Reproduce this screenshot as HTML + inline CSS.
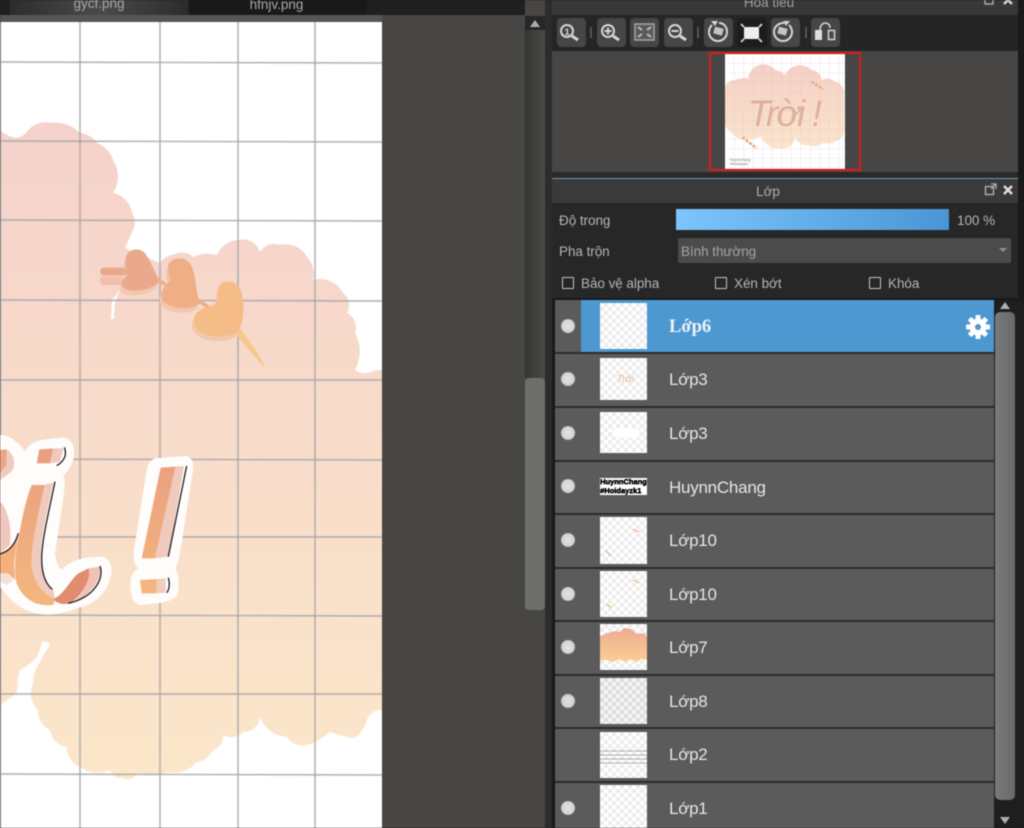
<!DOCTYPE html>
<html lang="vi">
<head>
<meta charset="utf-8">
<title>Lớp</title>
<style>
html,body{margin:0;padding:0;width:1024px;height:828px;overflow:hidden;background:#1a1a1a}
#w{position:relative;width:1024px;height:828px;overflow:hidden;font-family:"Liberation Sans","Noto Sans CJK JP",sans-serif;filter:blur(.5px)}
#w div,#w svg{position:absolute}
.tb{width:29px;height:29px;top:18px;background:#464646;border-radius:4px}
.row{left:555px;width:439px;height:52px;background:#5b5b5b}
.sep{left:555px;width:439px;height:2px;background:#2b2b2b}
.dot{left:561px;width:14px;height:14px;border-radius:50%;background:radial-gradient(circle,#e4e4e4 0,#d4d4d4 55%,#a5a5a5 100%)}
.th{left:600px;width:47px;background:repeating-conic-gradient(#ececec 0 25%,#fff 0 50%) 0 0/8px 8px}
.lb{left:669px;font-size:17px;letter-spacing:-.25px;line-height:20px;color:#e6e6e6;white-space:nowrap}
.t{color:#b5b5b5;font-size:13.5px;letter-spacing:-.05px;line-height:16px;white-space:nowrap}
.cb{width:10px;height:10px;border:1.5px solid #c4c4c4;top:277px;border-radius:1px}
</style>
</head>
<body>
<div id="w">
  <!-- background -->
  <div style="left:0;top:0;width:552px;height:828px;background:#474644"></div>

  <!-- tab bar -->
  <div style="left:0;top:0;width:525px;height:15px;background:#1f1f1f"></div>
  <div style="left:0;top:15px;width:382px;height:7px;background:#565656"></div>
  <div style="left:10px;top:0;width:178px;height:15px;background:linear-gradient(90deg,#2c2c2c,#4a4a4a 50%,#2c2c2c)"></div>
  <div style="left:190px;top:0;width:177px;height:15px;background:#191919"></div>
  <div style="left:0;top:-4px;width:198px;text-align:center;font-size:13.5px;line-height:16px;color:#a8a8a8">gycf.png</div>
  <div style="left:188px;top:-3px;width:177px;text-align:center;font-size:13.5px;line-height:16px;color:#a8a8a8">hfnjv.png</div>

  <!-- canvas -->
  <svg style="left:0;top:22px" width="382" height="806" viewBox="0 22 382 806">
    <defs>
      <linearGradient id="cg" gradientUnits="userSpaceOnUse" x1="0" y1="125" x2="0" y2="775">
        <stop offset="0" stop-color="#f5d2cb"/>
        <stop offset="1" stop-color="#fce7ca"/>
      </linearGradient>
      <linearGradient id="og" gradientUnits="userSpaceOnUse" x1="0" y1="60" x2="0" y2="520">
        <stop offset="0" stop-color="#ea9f80"/>
        <stop offset="1" stop-color="#f4b67e"/>
      </linearGradient>
    </defs>
    <rect x="0" y="22" width="382" height="806" fill="#fff"/>
    <path fill="url(#cg)" d="M0,130 Q8,137 16,138 Q22,137 26,133 A24,24 0 0 1 52,123 A34,34 0 0 1 80,133 A24,24 0 0 1 97,143 A26,26 0 0 1 113,160 A30,30 0 0 1 113,193 A24,24 0 0 1 132,213 A18,18 0 0 1 132,232 L125,248 L160,263 A16,16 0 0 1 173,255 A16,16 0 0 1 193,257 A34,34 0 0 1 217,255 A24,24 0 0 1 238,240 A18,18 0 0 1 260,252 A16,16 0 0 1 280,245 A24,24 0 0 1 307,257 A24,24 0 0 1 313,280 A26,26 0 0 1 343,293 A15,15 0 0 1 347,313 A16,16 0 0 1 355,333 A38,38 0 0 1 355,370 Q361,374 367,373 Q374,370 382,370 L382,710 A14,14 0 0 0 367,720 Q365,728 360,733 A10,10 0 0 1 347,737 Q338,735 330,732 Q318,742 307,745 A18,18 0 0 1 287,737 A30,30 0 0 1 260,717 A16,16 0 0 1 243,732 A16,16 0 0 1 223,735 A14,14 0 0 1 213,750 A20,20 0 0 1 197,762 A30,30 0 0 1 167,772 A36,36 0 0 1 137,773 A10,10 0 0 1 123,778 A12,12 0 0 1 110,770 A30,30 0 0 1 80,767 A20,20 0 0 1 67,747 A20,20 0 0 1 50,730 A20,20 0 0 1 38,710 A24,24 0 0 1 33,683 Q33,675 37,667 Q43,655 50,645 Q47,640 42,642 Q40,650 37,657 Q30,665 20,670 Q17,680 17,693 Q8,700 0,705 Z"/>
    <!-- scratch -->
    <path d="M120,290 L112,300 L111,319 L114,319 L115,302Z" fill="#fff"/>
    <!-- grid -->
    <g stroke="#a2a3a7" stroke-opacity=".75" stroke-width="1.7" fill="none">
      <path d="M80,22V828M160,22V828M238,22V828M315,22V828M.5,22V828"/>
      <path d="M0,62L382,63M0,141L382,142M0,220L382,221M0,300L382,301M0,380L382,380M0,459L382,460M0,537L382,537M0,615L382,616M0,694L382,694M0,774L382,775"/>
    </g>
    <!-- leaf sprig -->
    <g transform="translate(95,235) scale(.33333)">
      <path d="M435,280 C465,320 495,360 510,400 C480,365 450,335 425,300Z" fill="#f6c78f"/>
      <g fill="#f3c6ae" transform="translate(-6,14)">
        <path d="M92,70 C95,45 125,35 145,50 C165,70 175,105 195,140 C170,165 115,175 88,160 C75,150 78,135 95,125 C95,105 90,90 92,70Z"/>
        <path d="M220,90 C225,70 265,60 285,85 C305,115 300,165 315,205 C290,225 235,225 205,200 C195,180 200,155 225,140 C222,120 218,105 220,90Z"/>
        <path d="M370,160 C375,135 415,130 435,160 C450,195 450,250 430,290 C400,310 330,310 305,280 C285,255 300,225 340,215 C365,210 372,195 370,160Z"/>
      </g>
      <rect x="15" y="125" width="72" height="25" rx="10" fill="#f1c0aa"/>
      <rect x="15" y="98" width="80" height="24" rx="12" fill="#eaa98c"/>
      <path d="M92,70 C95,45 125,35 145,50 C165,70 175,105 195,140 C170,165 115,175 88,160 C75,150 78,135 95,125 C95,105 90,90 92,70Z" fill="#eaa98c"/>
      <path d="M185,130 L220,155 M300,190 L345,220" stroke="#efae86" stroke-width="10" fill="none"/>
      <path d="M220,90 C225,70 265,60 285,85 C305,115 300,165 315,205 C290,225 235,225 205,200 C195,180 200,155 225,140 C222,120 218,105 220,90Z" fill="#efae86"/>
      <path d="M370,160 C375,135 415,130 435,160 C450,195 450,250 430,290 C400,310 330,310 305,280 C285,255 300,225 340,215 C365,210 372,195 370,160Z" fill="#f5bc87"/>
    </g>
    <!-- lettering -->
    <g transform="translate(0,430) scale(.33333)">
      <path fill="#fffdfb" d="M0,15 C30,15 60,40 75,65 C85,45 100,35 125,30 L190,22 C215,25 225,50 222,80 C215,110 200,130 190,135 C195,150 195,170 190,200 L165,370 C170,400 175,415 185,418 C205,400 230,385 270,382 L305,380 C330,385 340,410 332,440 C320,490 290,520 230,535 C180,555 130,560 90,545 C50,530 20,500 0,470Z"/>
      <path fill="#fffdfb" d="M465,85 L560,78 C580,85 582,105 578,125 L540,370 C535,395 530,410 525,415 C538,430 538,470 532,495 C520,515 480,520 420,525 C395,520 390,490 392,450 C395,430 405,420 415,415 C400,405 400,380 402,360 L440,120 C445,100 452,90 465,85Z"/>
      <!-- left letter fragment -->
      <path fill="#eba585" d="M0,60 L20,58 L20,105 L0,130Z"/>
      <path fill="#eecabf" d="M20,58 C40,70 50,100 35,125 L0,150 L0,130 L20,105Z"/>
      <path fill="#efc7bd" d="M0,215 C25,240 35,290 30,345 L0,370Z"/>
      <path fill="#f3b07a" d="M0,372 C25,365 45,340 55,312 L42,400 L45,450 L25,430 L0,430Z"/>
      <path fill="#efc7bd" d="M0,430 L25,430 L40,450 L20,465 L0,455Z" opacity=".55"/>
      <!-- i dot -->
      <path fill="#ea9f80" d="M118,58 L160,55 L150,100 L110,100Z"/>
      <path fill="#f0c9bd" d="M160,55 L190,55 L180,95 L150,100Z"/>
      <!-- i body -->
      <path fill="url(#og)" d="M95,165 L135,165 C120,230 95,330 95,400 C95,440 120,490 165,505 L160,525 C110,530 70,510 50,460 C40,420 45,370 60,300 C70,240 85,190 95,165Z"/>
      <path fill="#f0cabd" d="M135,163 L160,158 C145,230 120,330 122,385 C122,430 140,465 160,480 L165,505 C120,490 95,440 95,400 C95,330 120,230 135,163Z"/>
      <path fill="#e18c6f" d="M160,508 C195,490 210,450 235,430 L265,415 C275,440 255,490 210,520 C190,525 170,520 160,508Z"/>
      <path fill="#efc2b5" d="M265,415 L300,410 C305,440 285,490 215,520 C255,490 275,440 265,415Z"/>
      <!-- exclamation -->
      <path fill="url(#og)" d="M482,113 L527,110 L465,385 L425,385Z"/>
      <path fill="#f0cabd" d="M527,110 L552,108 L505,380 L465,385Z"/>
      <path fill="#f4b67e" d="M420,450 L470,447 L470,490 L425,490Z"/>
      <path fill="#f0cdbd" d="M470,447 L497,445 L497,488 L470,490Z"/>
      <!-- ink lines -->
      <g fill="none" stroke="#222" stroke-width="4">
        <path d="M193,52 C200,70 198,90 170,107"/>
        <path d="M165,155 C150,230 125,330 125,385 C125,430 135,460 157,478"/>
        <path d="M300,408 C312,440 290,500 205,520"/>
        <path d="M55,310 C45,345 25,365 0,372"/>
        <path d="M560,108 L505,380"/>
        <path d="M505,443 C510,460 508,480 500,488"/>
      </g>
    </g>
  </svg>

  <!-- canvas scrollbar -->
  <div style="left:525px;top:16px;width:20px;height:14px;background:#262626"></div>
  <svg style="left:529px;top:19px" width="12" height="9"><path d="M6,1 L11,8 L1,8Z" fill="#a9b0b4"/></svg>
  <div style="left:525px;top:30px;width:20px;height:348px;background:linear-gradient(90deg,#353533,#4a4a48)"></div>
  <div style="left:525px;top:378px;width:20px;height:232px;background:#6e6e6c;border-radius:4px"></div>
  <div style="left:545px;top:0;width:7px;height:828px;background:#2c2c2c"></div>

  <!-- navigator -->
  <div style="left:552px;top:0;width:466px;height:15px;background:#383838"></div>
  <div style="left:552px;top:15px;width:466px;height:36px;background:#252525"></div>
  <div style="left:552px;top:51px;width:466px;height:121px;background:#474644"></div>
  <div style="left:552px;top:172px;width:466px;height:6px;background:#2a2a2a"></div>
  <div style="left:552px;top:-5px;width:434px;text-align:center;font-size:13.5px;line-height:16px;color:#9f9f9f">Hoa tiêu</div>
  <svg style="left:983px;top:-6px" width="34" height="14">
    <rect x="2" y="2" width="8" height="8" fill="none" stroke="#b5b5b5" stroke-width="1.3"/>
    <path d="M21,2 L29,10 M29,2 L21,10" stroke="#d5d5d5" stroke-width="2.5"/>
  </svg>

  <!-- toolbar -->
  <div class="tb" style="left:557px"></div>
  <div class="tb" style="left:597px"></div>
  <div class="tb" style="left:630px"></div>
  <div class="tb" style="left:664px"></div>
  <div class="tb" style="left:704px"></div>
  <div class="tb" style="left:737px;background:#1c1c1c;width:30px"></div>
  <div class="tb" style="left:771px"></div>
  <div class="tb" style="left:811px"></div>
  <div style="left:590px;top:27px;width:2px;height:11px;background:#555"></div>
  <div style="left:697px;top:27px;width:2px;height:11px;background:#555"></div>
  <div style="left:805px;top:27px;width:2px;height:11px;background:#555"></div>
  <svg style="left:552px;top:15px" width="300" height="36" fill="none" stroke="#d6d6d6">
    <circle cx="15" cy="16" r="6" stroke-width="2"/>
    <path d="M20,21 L26,25" stroke-width="3"/>
    <text x="12.500" y="20" font-size="9.500" font-weight="bold" fill="#d6d6d6" stroke="none" font-family="Liberation Sans, sans-serif">1</text>
    <circle cx="56" cy="16" r="6" stroke-width="2"/>
    <path d="M61,21 L67,25" stroke-width="3"/>
    <path d="M52.500,16 H59.500 M56,12.500 V19.500" stroke-width="2"/>
    <rect x="83" y="9" width="19" height="16" stroke="#a5a5a5" stroke-width="1.500" fill="#5a5a5a"/>
    <path d="M86,12 L90,15 M99,12 L95,15 M86,22 L90,19 M99,22 L95,19" stroke="#bdbdbd" stroke-width="2"/>
    <circle cx="123" cy="16" r="6" stroke-width="2"/>
    <path d="M128,21 L134,25" stroke-width="3"/>
    <path d="M119.500,16 H126.500" stroke-width="2"/>
    <path d="M167,8 C172,8 175,12 175,17 C175,22 171,26 166,26 C161,26 157,22 157,17 C157,14 158,12 160,10" stroke-width="2"/>
    <path d="M159,6 L166,6 L163,11Z" fill="#d6d6d6" stroke="none"/>
    <rect x="162" y="12.500" width="9" height="7" fill="#c4c4c4" stroke="none" transform="rotate(15 166 16)"/>
    <rect x="192" y="12" width="15" height="12" fill="#eee" stroke="none"/>
    <path d="M189,9 L192,12 M210,9 L207,12 M189,27 L192,24 M210,27 L207,24" stroke-width="1.800"/>
    <path d="M232,8 C226,8 222,12 222,17 C222,22 226,26 231,26 C236,26 240,22 240,17 C240,14 239,12 237,10" stroke-width="2"/>
    <path d="M238,6 L231,6 L234,11Z" fill="#d6d6d6" stroke="none"/>
    <rect x="226" y="12.500" width="9" height="7" fill="#c4c4c4" stroke="none" transform="rotate(15 230 16)"/>
    <rect x="263" y="15" width="7" height="10" fill="#dedede" stroke="none"/>
    <rect x="276.500" y="15.500" width="6" height="9" stroke-width="1.500"/>
    <path d="M268,15 C268,6 278,6 278,13" stroke-width="1.500"/>
  </svg>

  <!-- preview -->
  <svg style="left:705px;top:50px" width="160" height="125" viewBox="705 50 160 125">
    <defs>
      <pattern id="pg" x="725" y="54" width="9.500" height="9.500" patternUnits="userSpaceOnUse">
        <path d="M9.500,0 V9.500 H0" fill="none" stroke="#c3c4d0" stroke-opacity=".55" stroke-width=".8"/>
      </pattern>
      <linearGradient id="pc" x1="0" y1="0" x2="0" y2="1">
        <stop offset="0" stop-color="#f6d0c5"/>
        <stop offset="1" stop-color="#fce5cc"/>
      </linearGradient>
    </defs>
    <rect x="725" y="54" width="120" height="116" fill="#fff"/>
    <g transform="translate(705,50) scale(.33333)">
      <path fill="url(#pc)" d="M60,110 A34,34 0 0 1 90,90 Q110,82 130,85 A45,45 0 0 1 210,60 Q228,62 240,75 A50,50 0 0 1 320,60 A34,34 0 0 1 350,90 A34,34 0 0 1 390,95 A34,34 0 0 1 418,130 L418,230 A36,36 0 0 1 400,270 Q375,285 350,280 A34,34 0 0 1 310,285 A36,36 0 0 1 270,260 A36,36 0 0 1 230,295 Q210,298 195,290 Q178,280 170,260 Q135,272 100,265 Q75,250 60,225Z"/>
      <path d="M320,95 L355,118 M112,262 L155,295" stroke="#eba980" stroke-width="8" stroke-dasharray="9 4" fill="none"/>
    </g>
    <rect x="725" y="54" width="120" height="116" fill="url(#pg)"/>
    <text x="748" y="126" font-family="Liberation Sans, sans-serif" font-style="italic" font-size="37" fill="#deb09c" textLength="74">Trời !</text>
    <text x="730" y="161" font-family="Liberation Sans, sans-serif" font-size="3.500" fill="#777">HuynnChang</text>
    <text x="730" y="165" font-family="Liberation Sans, sans-serif" font-size="3.500" fill="#777">#Hoidayzk1</text>
    <path d="M710,53 H860 V170 H710Z" fill="none" stroke="#cf2020" stroke-width="2.200"/>
  </svg>

  <!-- layer panel -->
  <div style="left:552px;top:178px;width:466px;height:1px;background:#6d9ab5"></div>
  <div style="left:552px;top:179px;width:466px;height:24px;background:#3a3a3a"></div>
  <div style="left:552px;top:203px;width:466px;height:97px;background:#272727"></div>
  <div style="left:552px;top:184px;width:432px;text-align:center;font-size:13.5px;line-height:16px;color:#aeaeae">Lớp</div>
  <svg style="left:983px;top:183px" width="34" height="14">
    <rect x="2.500" y="3.500" width="8" height="8" fill="none" stroke="#b5b5b5" stroke-width="1.300"/>
    <path d="M8,1 H13 V6 M13,1 L8,6" fill="none" stroke="#b5b5b5" stroke-width="1.200"/>
    <path d="M21,3 L29,11 M29,3 L21,11" stroke="#e0e0e0" stroke-width="2.500"/>
  </svg>

  <div class="t" style="left:559px;top:213px">Độ trong</div>
  <div style="left:676px;top:209px;width:273px;height:21px;background:linear-gradient(90deg,#7dc5fc,#4a96d5)"></div>
  <div class="t" style="left:957px;top:213px">100 %</div>
  <div class="t" style="left:559px;top:244px">Pha trộn</div>
  <div style="left:678px;top:238px;width:333px;height:25px;background:#4b4b4b;border-radius:2px"></div>
  <div class="t" style="left:681px;top:244px;color:#a5a5a5">Bình thường</div>
  <svg style="left:998px;top:247px" width="10" height="6"><path d="M1,1 H9 L5,5Z" fill="#8f8f8f"/></svg>

  <div class="cb" style="left:562px"></div>
  <div class="t" style="left:581px;top:276px">Bảo vệ alpha</div>
  <div class="cb" style="left:715px"></div>
  <div class="t" style="left:734px;top:276px">Xén bớt</div>
  <div class="cb" style="left:869px"></div>
  <div class="t" style="left:888px;top:276px">Khóa</div>

  <!-- layer list -->
  <div style="left:552px;top:298px;width:466px;height:2px;background:#191919"></div>
  <div class="row" style="top:300px"></div>
  <div style="left:581px;top:300px;width:413px;height:52px;background:#4d98d0"></div>
  <div class="row" style="top:354px"></div>
  <div class="row" style="top:408px"></div>
  <div class="row" style="top:462px"></div>
  <div class="row" style="top:515px"></div>
  <div class="row" style="top:569px"></div>
  <div class="row" style="top:622px"></div>
  <div class="row" style="top:676px"></div>
  <div class="row" style="top:729px"></div>
  <div class="row" style="top:783px;height:45px"></div>
  <div class="sep" style="top:352px"></div>
  <div class="sep" style="top:406px"></div>
  <div class="sep" style="top:460px"></div>
  <div class="sep" style="top:513px"></div>
  <div class="sep" style="top:567px"></div>
  <div class="sep" style="top:620px"></div>
  <div class="sep" style="top:674px"></div>
  <div class="sep" style="top:727px"></div>
  <div class="sep" style="top:781px"></div>

  <div class="dot" style="top:319px"></div>
  <div class="dot" style="top:372px"></div>
  <div class="dot" style="top:426px"></div>
  <div class="dot" style="top:479px"></div>
  <div class="dot" style="top:533px"></div>
  <div class="dot" style="top:587px"></div>
  <div class="dot" style="top:640px"></div>
  <div class="dot" style="top:694px"></div>
  <div class="dot" style="top:801px"></div>

  <div class="th" style="top:303px;height:46px"></div>
  <div class="th" style="top:358px;height:42px"></div>
  <div class="th" style="top:412px;height:41px"></div>
  <div class="th" style="top:478px;height:17px;background:#fff;overflow:hidden;color:#000;font-weight:bold;font-size:7.500px;line-height:8.500px;white-space:nowrap;text-shadow:.4px 0 0 #000,0 .4px 0 #000">HuynnChang<br>#Hoidayzk1</div>
  <div class="th" style="top:517px;height:47px"></div>
  <div class="th" style="top:571px;height:46px"></div>
  <div class="th" style="top:624px;height:46px"></div>
  <div class="th" style="top:678px;height:46px;background:repeating-conic-gradient(#dedede 0 25%,#f4f4f4 0 50%) 0 0/8px 8px"></div>
  <div class="th" style="top:732px;height:46px"></div>
  <div class="th" style="top:785px;height:43px"></div>

  <!-- thumbnail contents -->
  <div style="left:612px;top:373px;width:26px;text-align:center;font-size:10px;line-height:14px;color:#edb9a2;font-style:italic">Trời</div>
  <div style="left:612px;top:428px;width:28px;height:10px;background:#fff;border-radius:5px"></div>
  <svg style="left:600px;top:517px" width="47" height="47"><path d="M33,12 L39,15 M6,34 L11,39" stroke="#eeb896" stroke-width="1.500"/></svg>
  <svg style="left:600px;top:571px" width="47" height="47"><path d="M33,9 L39,12 M7,33 L12,37" stroke="#f0c48a" stroke-width="1.500"/></svg>
  <svg style="left:600px;top:624px" width="47" height="46">
    <defs><linearGradient id="tg" x1="0" y1="0" x2="0" y2="1"><stop offset="0" stop-color="#ecab92"/><stop offset="1" stop-color="#fbcf94"/></linearGradient></defs>
    <path fill="url(#tg)" d="M0,12 L8,9 L15,7 L20,8 L24,4 L31,5 L37,10 L44,9 L47,13 L47,36 L41,35 L37,38 L31,35 L25,38 L19,35 L13,38 L7,36 L0,36Z"/>
  </svg>
  <svg style="left:600px;top:732px" width="47" height="46"><path d="M0,19H47M0,23H47M0,27H47M0,31H47" stroke="#999" stroke-width="1" opacity=".75"/></svg>

  <div class="lb" style="top:317px;font-weight:bold;color:#eef3f7;font-family:'Liberation Serif','Liberation Sans',serif;font-size:18.500px;letter-spacing:0">Lớp6</div>
  <div class="lb" style="top:370px">Lớp3</div>
  <div class="lb" style="top:424px">Lớp3</div>
  <div class="lb" style="top:478px">HuynnChang</div>
  <div class="lb" style="top:531px">Lớp10</div>
  <div class="lb" style="top:585px">Lớp10</div>
  <div class="lb" style="top:638px">Lớp7</div>
  <div class="lb" style="top:692px">Lớp8</div>
  <div class="lb" style="top:745px">Lớp2</div>
  <div class="lb" style="top:799px">Lớp1</div>

  <!-- gear -->
  <svg style="left:965px;top:314px" width="26" height="26" viewBox="-13 -13 26 26">
    <g fill="#fff">
      <rect x="-2.500" y="-12" width="5" height="24" rx="1"/>
      <rect x="-2.500" y="-12" width="5" height="24" rx="1" transform="rotate(45)"/>
      <rect x="-2.500" y="-12" width="5" height="24" rx="1" transform="rotate(90)"/>
      <rect x="-2.500" y="-12" width="5" height="24" rx="1" transform="rotate(135)"/>
      <circle r="8.500"/>
    </g>
    <circle r="3" fill="#4d98d0"/>
  </svg>

  <!-- list scrollbar -->
  <div style="left:994px;top:300px;width:30px;height:528px;background:#1e1e1e"></div>
  <svg style="left:999px;top:301px" width="12" height="9"><path d="M6,1 L11,8 L1,8Z" fill="#a9b0b4"/></svg>
  <div style="left:995px;top:312px;width:20px;height:488px;background:linear-gradient(90deg,#7a7a7a,#696969);border-radius:5px"></div>
  <svg style="left:999px;top:816px" width="12" height="9"><path d="M1,1 H11 L6,8Z" fill="#a9b0b4"/></svg>
</div>
</body>
</html>
